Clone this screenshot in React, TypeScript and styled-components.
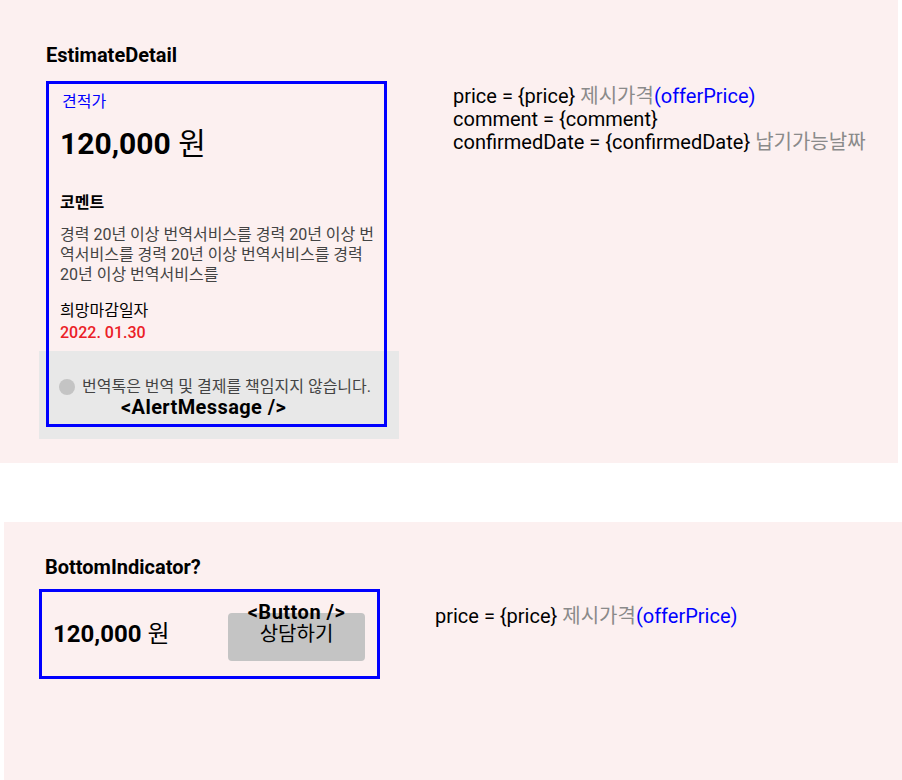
import React from "react";
import styled, { createGlobalStyle } from "styled-components";

const GlobalStyle = createGlobalStyle`
  html, body {
    margin: 0;
    padding: 0;
    background: #ffffff;
  }
  body {
    font-family: Roboto, "Noto Sans CJK KR", sans-serif;
    color: #000;
  }
`;

const Page = styled.div`
  display: flex;
  flex-direction: column;
  width: 902px;
`;

const Section = styled.section<{ $offset?: number; $height: number; $top?: number; $padTop: number; $padLeft: number }>`
  box-sizing: border-box;
  width: 898px;
  height: ${(p) => p.$height}px;
  margin-left: ${(p) => p.$offset ?? 0}px;
  margin-top: ${(p) => p.$top ?? 0}px;
  padding: ${(p) => p.$padTop}px 0 0 ${(p) => p.$padLeft}px;
  background: #fcf0f0;
`;

const Row = styled.div`
  display: flex;
  align-items: flex-start;
`;

const Column = styled.div`
  display: flex;
  flex-direction: column;
`;

const Title = styled.h2<{ $gap: number }>`
  margin: 0 0 ${(p) => p.$gap}px 0;
  font-size: 20px;
  line-height: 24px;
  font-weight: 700;
  white-space: nowrap;
`;

const Card = styled.div`
  position: relative;
  width: 341px;
  display: flex;
  flex-direction: column;
  &::after {
    content: "";
    position: absolute;
    inset: 0;
    border: 3px solid #0000ff;
    pointer-events: none;
  }
`;

const CardBody = styled.div`
  display: flex;
  flex-direction: column;
  padding: 11px 10px 8px 14px;
`;

const Caption = styled.div`
  margin-left: 2px;
  font-size: 16px;
  line-height: 20px;
  color: #0000ff;
`;

const BigPrice = styled.div<{ $size: number; $top?: number }>`
  margin-top: ${(p) => p.$top ?? 0}px;
  font-size: ${(p) => p.$size}px;
  line-height: ${(p) => Math.round(p.$size * 1.2)}px;
  font-weight: 700;
  white-space: nowrap;
`;

const Won = styled.span`
  font-weight: 400;
`;

const Label = styled.div<{ $top: number; $bold?: boolean }>`
  margin-top: ${(p) => p.$top}px;
  font-size: 16px;
  line-height: 20px;
  font-weight: ${(p) => (p.$bold ? 700 : 400)};
`;

const Comment = styled.p`
  margin: 12px 0 0 0;
  font-size: 15px;
  line-height: 19px;
  color: #444444;
  & > span {
    font-size: 16px;
  }
`;

const DateText = styled.div`
  margin-top: 2px;
  font-size: 16px;
  line-height: 20px;
  font-weight: 500;
  color: #eb2027;
`;

const Alert = styled.div`
  display: flex;
  flex-direction: column;
  height: 88px;
  box-sizing: border-box;
  margin: 0 -12px -12px -7px;
  padding: 26px 0 0 20px;
  background: #e8e8e8;
`;

const AlertRow = styled.div`
  display: flex;
  align-items: center;
  gap: 7px;
  height: 20px;
`;

const Dot = styled.span`
  width: 16px;
  height: 16px;
  border-radius: 50%;
  background: #c4c4c4;
  flex: none;
`;

const AlertText = styled.span`
  font-size: 16px;
  line-height: 20px;
  color: #444444;
  white-space: nowrap;
`;

const ComponentTag = styled.div<{ $indent?: number }>`
  padding-left: ${(p) => p.$indent ?? 0}px;
  font-size: 20px;
  line-height: 20px;
  font-weight: 700;
  letter-spacing: 0.4px;
  white-space: nowrap;
`;

const Props = styled.div<{ $left: number; $top: number }>`
  margin-left: ${(p) => p.$left}px;
  margin-top: ${(p) => p.$top}px;
  display: flex;
  flex-direction: column;
  font-size: 20px;
  line-height: 23px;
  white-space: nowrap;
`;

const Hint = styled.span<{ $tone: "gray" | "blue" }>`
  color: ${(p) => (p.$tone === "gray" ? "#8a8a8a" : "#0000ff")};
`;

const IndicatorBox = styled.div`
  box-sizing: border-box;
  width: 341px;
  height: 90px;
  margin-left: -6px;
  border: 3px solid #0000ff;
  display: flex;
  align-items: center;
  justify-content: space-between;
  padding: 0 12px 0 11px;
`;

const ButtonWrap = styled.div`
  position: relative;
  margin-top: 6px;
`;

const ActionButton = styled.button`
  box-sizing: border-box;
  width: 137px;
  height: 48px;
  border: none;
  border-radius: 4px;
  background: #c4c4c4;
  padding: 9px 0 0 0;
  display: flex;
  justify-content: center;
  align-items: flex-start;
  font-family: Roboto, "Noto Sans CJK KR", sans-serif;
  font-size: 20px;
  line-height: 24px;
  color: #000;
`;

const ButtonTag = styled.div`
  position: absolute;
  left: 0;
  right: 0;
  top: -11px;
  text-align: center;
  font-size: 20px;
  line-height: 21px;
  font-weight: 700;
  letter-spacing: 0.5px;
  white-space: nowrap;
`;

const PriceProp = () => (
  <div>
    price = {"{price}"} <Hint $tone="gray">제시가격</Hint>
    <Hint $tone="blue">(offerPrice)</Hint>
  </div>
);

export default function App() {
  return (
    <>
      <GlobalStyle />
      <Page>
        <Section $height={463} $padTop={43} $padLeft={46}>
          <Row>
            <Column>
              <Title $gap={14}>EstimateDetail</Title>
              <Card>
                <CardBody>
                  <Caption>견적가</Caption>
                  <BigPrice $size={30} $top={14}>
                    120,000 <Won>원</Won>
                  </BigPrice>
                  <Label $top={31} $bold>
                    코멘트
                  </Label>
                  <Comment>
                    <span>
                      경력 20년 이상 번역서비스를 경력 20년 이상 번역서비스를 경력 20년 이상 번역서비스를 경력 20년
                      이상 번역서비스를
                    </span>
                  </Comment>
                  <Label $top={16}>희망마감일자</Label>
                  <DateText>2022. 01.30</DateText>
                </CardBody>
                <Alert>
                  <AlertRow>
                    <Dot />
                    <AlertText>번역톡은 번역 및 결제를 책임지지 않습니다.</AlertText>
                  </AlertRow>
                  <ComponentTag $indent={62}>&lt;AlertMessage /&gt;</ComponentTag>
                </Alert>
              </Card>
            </Column>
            <Props $left={66} $top={42}>
              <PriceProp />
              <div>comment = {"{comment}"}</div>
              <div>
                confirmedDate = {"{confirmedDate}"} <Hint $tone="gray">납기가능날짜</Hint>
              </div>
            </Props>
          </Row>
        </Section>
        <Section $offset={4} $top={59} $height={258} $padTop={33} $padLeft={41}>
          <Title $gap={10}>BottomIndicator?</Title>
          <Row>
            <IndicatorBox>
              <BigPrice $size={24}>
                120,000 <Won>원</Won>
              </BigPrice>
              <ButtonWrap>
                <ButtonTag>&lt;Button /&gt;</ButtonTag>
                <ActionButton>상담하기</ActionButton>
              </ButtonWrap>
            </IndicatorBox>
            <Props $left={55} $top={16}>
              <PriceProp />
            </Props>
          </Row>
        </Section>
      </Page>
    </>
  );
}
